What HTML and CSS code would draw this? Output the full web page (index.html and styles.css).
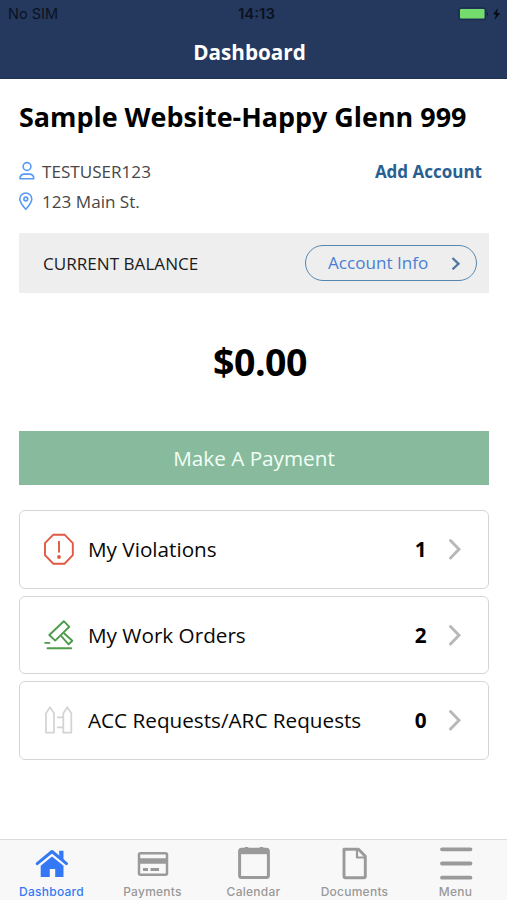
FILE: index.html
```html
<!DOCTYPE html>
<html lang="en">
<head>
<meta charset="utf-8">
<meta name="viewport" content="width=device-width, initial-scale=1">
<title>Dashboard</title>
<link rel="stylesheet" href="styles.css">
</head>
<body>
<div class="app">
  <header class="header">
    <div class="status">
      <span class="carrier">No SIM</span>
      <span class="clock">14:13</span>
      <svg class="battery" width="44" height="14" viewBox="0 0 44 14"><rect x=".8" y=".8" width="27" height="12" rx="2.5" fill="none" stroke="#1b2b4b"/><rect x="2" y="2" width="24.5" height="9.5" rx="1" fill="#73dc6c"/><path d="M29 5q2 2 0 4z" fill="#10192c"/><path d="M40 1L35 7.500h3L36.500 13l5.800-7h-3.300z" fill="#070c16"/></svg>
    </div>
    <h1 class="nav-title">Dashboard</h1>
  </header>

  <main class="content">
    <h2 class="community">Sample Website-Happy Glenn 999</h2>
    <section class="account">
      <div class="details">
        <div class="detail"><svg width="16" height="20" viewBox="0 0 16 20" fill="none" stroke="#5a9af5" stroke-width="1.600"><circle cx="8" cy="5.500" r="3.900"/><path d="M1 17.800h13.800c0-3-2-4.700-4.500-4.700H5.500C3 13.100 1 14.800 1 17.800z" stroke-linejoin="round"/></svg><span>TESTUSER123</span></div>
        <div class="detail"><svg width="16" height="20" viewBox="0 0 16 20" fill="none" stroke="#5a9af5" stroke-width="1.600"><path d="M6.800 18.300C3 14 .8 11 .8 8a6 6 0 0 1 12 0c0 3-2.200 6-6 10.300z" stroke-linejoin="round"/><circle cx="6.800" cy="8" r="1.900"/></svg><span>123 Main St.</span></div>
      </div>
      <a class="add">Add Account</a>
    </section>

    <section class="balance">
      <span class="balance-label">CURRENT BALANCE</span>
      <a class="info"><span>Account Info</span><svg width="10" height="14" viewBox="0 0 10 14" fill="none" stroke="#50789f" stroke-width="2.300"><path d="M1.500 2L7.500 7.800l-6 5.500"/></svg></a>
    </section>
    <p class="amount">$0.00</p>
    <a class="pay">Make A Payment</a>

    <ul class="cards">
      <li class="card">
        <svg class="card-icon" width="32" height="32" viewBox="0 0 32 32" fill="none" stroke="#e05a43" stroke-width="1.900"><path d="M10.300 1.700h11.200l8.300 8.500v12l-8.300 8.500H10.300L2 22.200v-12z"/><path d="M16 8v11.500"/><circle cx="16" cy="24" r="1.900" fill="#e05a43" stroke="none"/></svg>
        <span class="card-name">My Violations</span><b class="count">1</b>
        <svg class="chevron" width="14" height="22" viewBox="0 0 14 22"><path d="M2.500 2.500l8.500 8.800-8.500 8.700"/></svg>
      </li>
      <li class="card">
        <svg class="card-icon" width="32" height="32" viewBox="0 0 32 32" fill="none" stroke="#4d9b4b" stroke-width="1.900" stroke-linejoin="round" stroke-linecap="round"><path d="M20.800 2.200l5.500 5.600L12.200 21.600 6.300 16z"/><path d="M18.500 17.300l7.100 8 3.700-3.600-8-7.200M2.200 23.900h4.200M4.500 29.300h23.700"/></svg>
        <span class="card-name">My Work Orders</span><b class="count">2</b>
        <svg class="chevron" width="14" height="22" viewBox="0 0 14 22"><path d="M2.500 2.500l8.500 8.800-8.500 8.700"/></svg>
      </li>
      <li class="card">
        <svg class="card-icon" width="32" height="32" viewBox="0 0 32 32" fill="none" stroke="#d4d4d4" stroke-width="1.800" stroke-linejoin="round"><path d="M3 9.200l4-6 4 6v19.500H3zM20.300 9.200l4-6 4 6v19.500h-8zM14 13.300h6M14 23.300h6"/></svg>
        <span class="card-name">ACC Requests/ARC Requests</span><b class="count">0</b>
        <svg class="chevron" width="14" height="22" viewBox="0 0 14 22"><path d="M2.500 2.500l8.500 8.800-8.500 8.700"/></svg>
      </li>
    </ul>
  </main>

  <nav class="tabs">
    <a class="tab active"><svg width="36" height="36" viewBox="0 0 36 36"><path d="M3.200 18.600L18 6.500l14.500 12.100" fill="none" stroke="#3478f6" stroke-width="3" stroke-linecap="round" stroke-linejoin="round"/><path d="M25.200 5.700h4.300v10l-4.300-3.500z" fill="#3478f6"/><path d="M18 11.500l11.500 9.300V32h-8.300v-8h-5.400v8H6.700V20.800z" fill="#3478f6"/></svg><span>Dashboard</span></a>
    <a class="tab"><svg width="36" height="36" viewBox="0 0 36 36" fill="none" stroke="#9a9a9a"><rect x="4" y="8.200" width="28" height="21.500" rx="1.500" stroke-width="2.500"/><path d="M4 16h28" stroke-width="5.500"/><path d="M8 24.500h5m2.500 0h8.500" stroke-width="3"/></svg><span>Payments</span></a>
    <a class="tab"><svg width="36" height="36" viewBox="0 0 36 36" fill="none" stroke="#9a9a9a"><rect x="3.600" y="4.300" width="28.800" height="28.300" rx="2" stroke-width="3"/><path d="M3.500 6.700h29" stroke-width="5"/><path d="M10.500 2v3M25.500 2v3" stroke-width="3.500"/></svg><span>Calendar</span></a>
    <a class="tab"><svg width="36" height="36" viewBox="0 0 36 36" fill="none" stroke="#9a9a9a" stroke-width="2.900" stroke-linejoin="round"><path d="M7 4.200h14.500l6.800 7v20.500a1 1 0 0 1-1 1H8a1 1 0 0 1-1-1z"/><path d="M20 4.500v8h8" stroke-width="2.200"/></svg><span>Documents</span></a>
    <a class="tab"><svg width="36" height="36" viewBox="0 0 36 36" fill="none" stroke="#9a9a9a" stroke-width="3.800" stroke-linecap="round"><path d="M4 4.300h28.500M4 18.500h28.500M4 32.700h28.500"/></svg><span>Menu</span></a>
  </nav>
</div>
</body>
</html>
```
FILE: styles.css
```css
* { box-sizing: border-box; }
body { margin: 0; background: #fff; color: #080808; font-family: "Open Sans", sans-serif; }
h1, h2, p, ul { margin: 0; padding: 0; }
svg { display: block; flex: none; }
.app { display: flex; flex-direction: column; height: 900px; overflow: hidden; }
.header { height: 79px; background: #25395f; border-bottom: 1px solid #1f3152; }
.status { display: grid; grid-template-columns: 1fr auto 1fr; align-items: center; height: 27px; padding: 0 5px 0 8px; font: 14.5px/27px Inter, sans-serif; color: #0b1220; }
.clock { font-weight: 600; font-size: 15px; padding-left: 3px; }
.battery { justify-self: end; }
.nav-title { color: #fff; font-size: 20.7px; font-weight: 700; line-height: 51px; text-align: center; padding-right: 8px; }
.content { flex: 1; padding: 0 18px 0 19px; }
.community { margin-top: 20px; font-size: 26.9px; line-height: 36px; font-weight: 700; white-space: nowrap; color: #000; }
.account { display: flex; justify-content: space-between; margin-top: 21px; padding-right: 7px; }
.detail { display: flex; align-items: center; gap: 7px; height: 30px; font-size: 17.1px; color: #474747; }
.add { font-size: 17px; font-weight: 700; line-height: 32px; color: #296092; }
.balance { display: flex; align-items: center; justify-content: space-between; height: 60px; margin-top: 17px; padding: 0 12px 0 24px; background: #eee; color: #1c1c1c; }
.balance-label { font-size: 17.1px; }
.info { display: flex; align-items: center; justify-content: space-between; width: 172px; height: 36px; padding: 0 15px 1px 22px; border: 1.500px solid #5486ae; border-radius: 18px; font-size: 17.1px; color: #4a80d2; }
.amount { margin-top: 44px; padding-left: 12px; font-size: 37.5px; line-height: 50px; font-weight: 700; letter-spacing: -.5px; text-align: center; color: #000; }
.pay { display: block; height: 54px; margin-top: 44px; background: #88bb9e; color: #f2fff5; font-size: 20.7px; line-height: 55px; text-align: center; }
.cards { display: grid; gap: 7px; margin-top: 25px; list-style: none; }
.card { display: flex; align-items: center; height: 78.500px; padding: 0 26.500px 0 23px; border: 1.500px solid #d5d5d5; border-radius: 6px; font-size: 20.7px; }
.card-name { flex: 1; margin-left: 13px; white-space: nowrap; }
.count { margin-right: 21px; font-weight: 700; color: #000; }
.chevron path { fill: none; stroke: #b8b8b8; stroke-width: 2.900; stroke-linecap: round; }
.tabs { display: grid; grid-template-columns: repeat(5, 101px); justify-content: center; height: 61px; padding-top: 5px; background: #f8f8f8; border-top: 1px solid #dcdcdc; }
.tab { display: flex; flex-direction: column; align-items: center; font: 500 12px/14px Inter, sans-serif; letter-spacing: .25px; color: #999; }
.tab span { margin-top: 4px; }
.active { color: #3478f6; }
```
